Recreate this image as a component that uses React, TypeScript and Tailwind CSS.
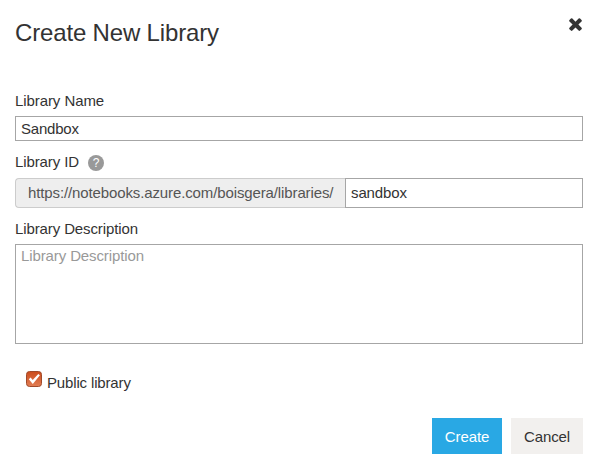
import React from 'react';

function CloseIcon() {
  return (
    <svg className="block h-[13px] w-[13px]" viewBox="292 344 1208 1220" fill="#333333" aria-hidden="true">
      <path d="M1490 1322q0 40-28 68l-136 136q-28 28-68 28t-68-28l-294-294-294 294q-28 28-68 28t-68-28l-136-136q-28-28-28-68t28-68l294-294-294-294q-28-28-28-68t28-68l136-136q28-28 68-28t68 28l294 294 294-294q28-28 68-28t68 28l136 136q28 28 28 68t-28 68l-294 294 294 294q28 28 28 68z" />
    </svg>
  );
}

function CheckedBox() {
  return (
    <svg className="block h-4 w-4" viewBox="0 0 16 16" aria-hidden="true">
      <defs>
        <linearGradient id="box" x1="0" y1="0" x2="0" y2="1">
          <stop offset="0" stopColor="#cb4b1b" />
          <stop offset="1" stopColor="#e27e55" />
        </linearGradient>
      </defs>
      <rect x="0.5" y="0.5" width="15" height="15" rx="3" fill="url(#box)" stroke="#a04a2a" />
      <path d="M2.8 8.2 4.6 6.6 6.7 9.1 12.3 2.9 13.9 4.3 6.8 13Z" fill="#fff" />
    </svg>
  );
}

export default function App() {
  return (
    <form
      className="h-[469px] w-[598px] bg-white px-[15px] pt-[18px] font-['Liberation_Sans',Arial,sans-serif] text-[15px] leading-5 tracking-[-0.11px] text-[#333333]"
      onSubmit={(e) => e.preventDefault()}
    >
      <header className="flex h-[73px] items-start justify-between">
        <h1 className="text-2xl leading-[30px] tracking-[-0.16px]">Create New Library</h1>
        <button type="button" aria-label="Close" className="mr-px">
          <CloseIcon />
        </button>
      </header>

      <label htmlFor="name" className="block h-[25px] tracking-[-0.08px]">Library Name</label>
      <input
        id="name"
        defaultValue="Sandbox"
        className="block h-[25px] w-[568px] border border-[#a6a6a6] px-[5px] tracking-[-0.2px] outline-none"
      />

      <div className="flex h-[37px] items-start pt-[11px]">
        <label htmlFor="library-id" className="w-[64px] whitespace-nowrap">Library ID</label>
        <span className="mt-[3px] ml-[9px] flex size-4 items-center justify-center rounded-full bg-[#999999] text-[12px] leading-4 tracking-normal text-white">
          ?
        </span>
      </div>
      <div className="flex h-[30px] w-[568px]">
        <span className="w-[330px] rounded-l border border-r-0 border-[#cccccc] bg-[#eeeeee] pl-3 leading-7 tracking-[-0.12px] text-[#555555]">
          https://notebooks.azure.com/boisgera/libraries/
        </span>
        <input
          id="library-id"
          defaultValue="sandbox"
          className="w-[238px] border border-[#a6a6a6] px-[5px] tracking-[-0.12px] outline-none"
        />
      </div>

      <label htmlFor="description" className="block h-9 pt-[11px]">Library Description</label>
      <textarea
        id="description"
        placeholder="Library Description"
        className="block h-[100px] w-[568px] resize-none border border-[#a6a6a6] px-[5px] py-px outline-none placeholder:text-[#999999]"
      />

      <div className="flex h-[74px] items-start pt-[27px] pl-[11px]">
        <CheckedBox />
        <span className="mt-[2px] ml-[5px] tracking-[-0.15px]">Public library</span>
      </div>

      <footer className="flex w-[568px] justify-end gap-[9px]">
        <button type="submit" className="h-9 w-[70px] bg-[#29a8e4] pt-px text-white">Create</button>
        <button type="button" className="h-9 w-[72px] bg-[#f2f0ee] pt-px">Cancel</button>
      </footer>
    </form>
  );
}
